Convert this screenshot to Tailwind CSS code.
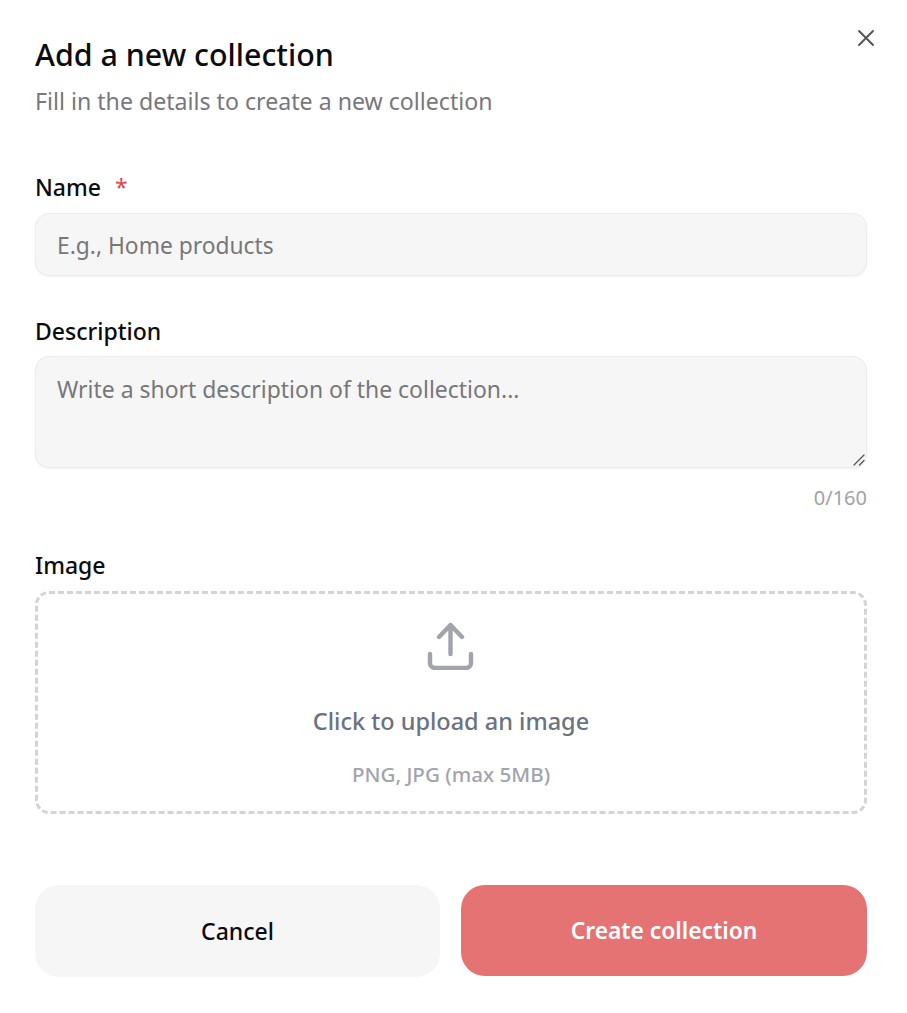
<!DOCTYPE html>
<html lang="en">
<head>
<meta charset="utf-8">
<script src="https://cdn.jsdelivr.net/npm/@tailwindcss/browser@4"></script>
<title>Add a new collection</title>
</head>
<body class="bg-white font-['Noto_Sans',sans-serif]">
<div class="relative w-[907px] h-[1013px] overflow-hidden pl-[35px] pr-[40px] pt-[35px]">
  <button class="absolute right-[31px] top-[28px] text-[#52525b]" aria-label="Close">
    <svg class="w-5 h-5 block" viewBox="0 0 20 20" fill="none" stroke="currentColor" stroke-width="1.9" stroke-linecap="round"><path d="M3 3 17 17M17 3 3 17"/></svg>
  </button>
  <h1 class="text-[30.4px] leading-[40px] font-medium text-[#0c0c0e]">Add a new collection</h1>
  <p class="mt-[10px] text-[23.15px] leading-[32px] text-[#77777c]">Fill in the details to create a new collection</p>

  <label class="mt-[54px] flex h-[32px] items-center text-[23px] font-medium text-[#0c0c0e]">Name<span class="ml-[14px] text-[#dc4a4a] font-normal">*</span></label>
  <input class="mt-[10px] block w-full h-[63px] rounded-[14px] border border-[#ececee] bg-[#f6f6f7] px-[21px] pt-[2px] text-[22.8px] shadow-[0_1px_2px_rgba(0,0,0,0.05)] outline-none placeholder:text-[#777779]" placeholder="E.g., Home products">

  <label class="mt-[39px] flex h-[32px] items-center text-[23px] font-medium text-[#0c0c0e]">Description</label>
  <div class="relative mt-[9px]">
    <textarea class="block w-full h-[112px] resize-none rounded-[14px] border border-[#ececee] bg-[#f6f6f7] px-[21px] pt-[16px] pb-[12px] text-[22.95px] leading-[32px] shadow-[0_1px_2px_rgba(0,0,0,0.05)] outline-none placeholder:text-[#777779]" placeholder="Write a short description of the collection..."></textarea>
    <svg class="absolute right-[2px] bottom-[2px] w-[12px] h-[12px] text-[#55555a]" viewBox="0 0 12 12" fill="none" stroke="currentColor" stroke-width="1.3" stroke-linecap="round"><path d="M1 11 11 1M6.5 11 11 6.5"/></svg>
  </div>
  <p class="mt-[16px] text-right text-[20px] leading-[28px] text-[#a1a1aa]">0/160</p>

  <label class="mt-[37px] flex h-[32px] items-center text-[23px] font-medium text-[#0c0c0e]">Image</label>
  <div class="mt-[10px] flex h-[223px] flex-col items-center rounded-[14px] border-[3px] border-dashed border-[#d4d4d8]">
    <svg class="mt-[28px] w-[48px] h-[48px] text-[#a1a3ad]" viewBox="0 0 48 48" fill="none" stroke="currentColor" stroke-width="4.4" stroke-linecap="round" stroke-linejoin="round"><path d="M23.5 3V32M12 15 23.5 3 35 15"/><path d="M3 32v9a5 5 0 0 0 5 5h31a5 5 0 0 0 5-5v-9"/></svg>
    <p class="mt-[35px] text-[23.5px] leading-[32px] font-medium text-[#6b7280]">Click to upload an image</p>
    <p class="mt-[24px] text-[20.6px] leading-[26px] font-medium text-[#a1a3ad]">PNG, JPG (max 5MB)</p>
  </div>

  <div class="mt-[71px] grid grid-cols-[405px_1fr] gap-[21px]">
    <button class="h-[92px] rounded-[24px] bg-[#f6f6f7] text-[23px] font-medium text-[#0c0c0e]">Cancel</button>
    <button class="h-[91px] rounded-[24px] bg-[#e57373] pt-[2px] text-[22.8px] font-semibold text-white">Create collection</button>
  </div>
</div>
</body>
</html>
